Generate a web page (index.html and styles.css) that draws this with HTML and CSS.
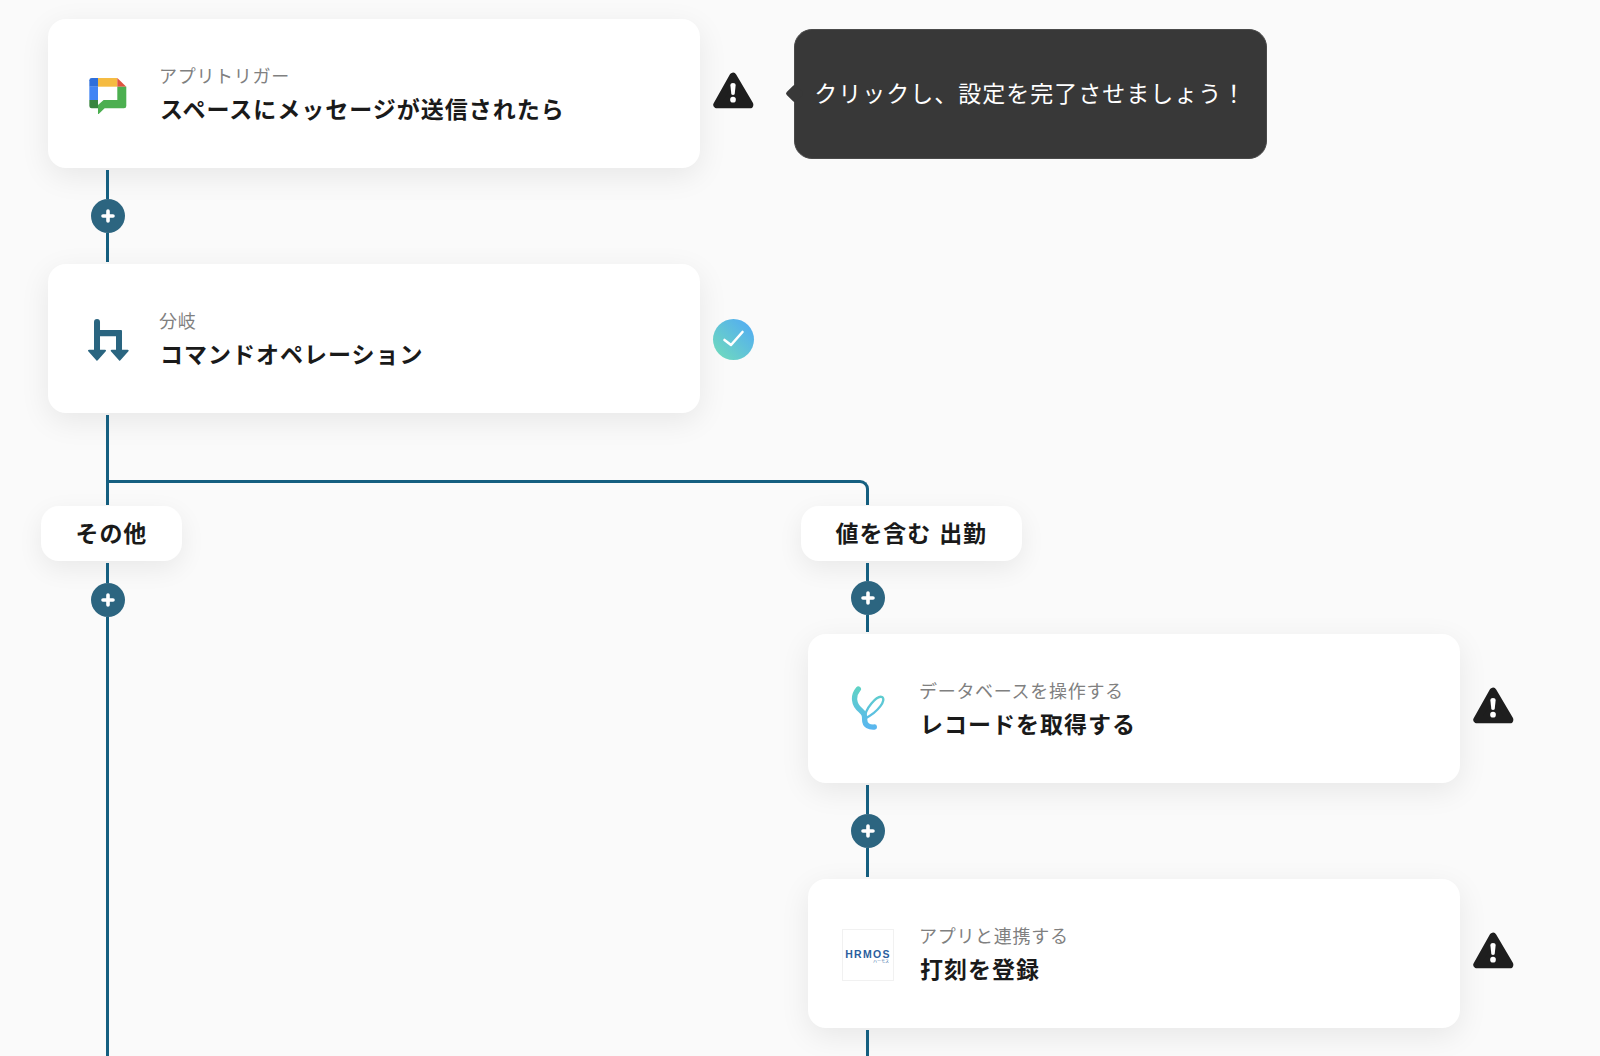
FILE: index.html
```html
<!DOCTYPE html>
<html lang="ja">
<head>
<meta charset="utf-8">
<title>フロー</title>
<link rel="stylesheet" href="styles.css">
</head>
<body>
<main class="canvas">
  <div class="step">
    <article class="card">
      <div class="icon-box">
        <svg class="ico-chat" viewBox="58 52 112 110">
          <path fill="#2f6fdb" d="M66 52H85V78H59V59Q59 52 66 52Z"/>
          <rect fill="#4285f4" x="59" y="78" width="26" height="40"/>
          <path fill="#38853f" d="M59 118H85V143H66Q59 143 59 136Z"/>
          <rect fill="#f5bb41" x="85" y="52" width="58" height="26"/>
          <path fill="#e0533f" d="M143 52L170 78H143Z"/>
          <path fill="#4caf50" d="M143 78H170V136Q170 143 163 143H105L85 162V118H143Z"/>
          <path fill="#fff" d="M85 118H102L85 133Z"/>
        </svg>
      </div>
      <div class="text">
        <p class="sub">アプリトリガー</p>
        <h2 class="title">スペースにメッセージが送信されたら</h2>
      </div>
    </article>
    <svg class="warn" viewBox="40 35 122 110"><path class="warn-bg" d="M100 48L52 133H150Z"/><path class="warn-mark" d="M92 74Q92 68 100 68Q108 68 108 74L105 102Q100 106 95 102Z"/><circle class="warn-mark" cx="100" cy="118" r="8.5"/></svg>
    <div class="tooltip">クリックし、設定を完了させましょう！</div>
  </div>

  <div class="link">
    <span class="line"></span>
    <span class="plus"><svg viewBox="0 0 14 14"><path d="M7 2V12M2 7H12"/></svg></span>
    <span class="line"></span>
  </div>

  <div class="step">
    <article class="card">
      <div class="icon-box">
        <svg class="ico-branch" viewBox="50 52 128 132">
          <path fill="#2a6580" stroke="#2a6580" stroke-width="6" stroke-linejoin="round" d="M74 64a6 6 0 0 1 12 0V91H152V150H172L148 177L124 150H140V104H86V150H104L80 177L56 150H74Z"/>
        </svg>
      </div>
      <div class="text">
        <p class="sub">分岐</p>
        <h2 class="title">コマンドオペレーション</h2>
      </div>
    </article>
    <span class="check"><svg viewBox="0 0 41 41"><path d="M11.5 21L18 26L29.500 13"/></svg></span>
  </div>

  <div class="link stem"><span class="line"></span></div>
  <div class="bus"></div>

  <div class="branches">
    <section class="column column-left">
      <div class="pill">その他</div>
      <div class="link rail">
        <span class="line line-short"></span>
        <span class="plus"><svg viewBox="0 0 14 14"><path d="M7 2V12M2 7H12"/></svg></span>
        <span class="line"></span>
      </div>
    </section>

    <section class="column">
      <div class="pill">値を含む 出勤</div>
      <div class="link link-short">
        <span class="line"></span>
        <span class="plus"><svg viewBox="0 0 14 14"><path d="M7 2V12M2 7H12"/></svg></span>
        <span class="line"></span>
      </div>
      <div class="step">
        <article class="card">
          <div class="icon-box">
            <svg class="ico-yoom" viewBox="60 40 120 140">
              <defs>
                <linearGradient id="yg" gradientUnits="userSpaceOnUse" x1="0" y1="50" x2="0" y2="178">
                  <stop offset="0" stop-color="#5fd3c4"/>
                  <stop offset="1" stop-color="#5ab6f0"/>
                </linearGradient>
              </defs>
              <path fill="none" stroke="url(#yg)" stroke-width="7" d="M106 146C102 118 142 76 156 82C170 90 146 126 106 146Z"/>
              <path fill="none" stroke="url(#yg)" stroke-width="16" stroke-linecap="round" d="M85 58C68 78 70 105 92 122C104 132 104 140 104 150C104 168 118 173 133 172"/>
            </svg>
          </div>
          <div class="text">
            <p class="sub">データベースを操作する</p>
            <h2 class="title">レコードを取得する</h2>
          </div>
        </article>
        <svg class="warn" viewBox="40 35 122 110"><path class="warn-bg" d="M100 48L52 133H150Z"/><path class="warn-mark" d="M92 74Q92 68 100 68Q108 68 108 74L105 102Q100 106 95 102Z"/><circle class="warn-mark" cx="100" cy="118" r="8.5"/></svg>
      </div>
      <div class="link">
        <span class="line"></span>
        <span class="plus"><svg viewBox="0 0 14 14"><path d="M7 2V12M2 7H12"/></svg></span>
        <span class="line"></span>
      </div>
      <div class="step">
        <article class="card">
          <div class="icon-box logo-box">
            <span class="logo-name">HRMOS</span>
            <span class="logo-kana">ハーモス</span>
          </div>
          <div class="text">
            <p class="sub">アプリと連携する</p>
            <h2 class="title">打刻を登録</h2>
          </div>
        </article>
        <svg class="warn" viewBox="40 35 122 110"><path class="warn-bg" d="M100 48L52 133H150Z"/><path class="warn-mark" d="M92 74Q92 68 100 68Q108 68 108 74L105 102Q100 106 95 102Z"/><circle class="warn-mark" cx="100" cy="118" r="8.5"/></svg>
      </div>
      <div class="link rail"><span class="line"></span></div>
    </section>
  </div>
</main>
</body>
</html>
```
FILE: styles.css
```css
* { box-sizing: border-box; }
html, body { margin: 0; padding: 0; }
body {
  background: #fafafa;
  font-family: "Noto Sans CJK JP", "Noto Sans", sans-serif;
  overflow: hidden;
}
.canvas {
  width: 1600px;
  height: 1056px;
  padding: 19px 0 0 41px;
  display: flex;
  flex-direction: column;
  overflow: hidden;
}
.step {
  display: flex;
  align-items: center;
  flex: none;
  margin-left: 7px;
}
.card {
  width: 652px;
  height: 149px;
  flex: none;
  background: #fff;
  border-radius: 18px;
  box-shadow: 0 8px 30px rgba(0, 0, 0, .08);
  display: flex;
  align-items: center;
  padding-left: 34px;
  gap: 25px;
}
.icon-box {
  width: 52px;
  height: 52px;
  flex: none;
  display: flex;
  align-items: center;
  justify-content: center;
  margin-top: 3px;
}
.ico-chat { width: 37.300px; height: 36.700px; margin-top: 2px; }
.ico-branch { width: 42.700px; height: 44px; margin-top: -1px; }
.ico-yoom { width: 40px; height: 46.700px; margin: -7px 0 0 4px; }
.logo-box {
  border: 1px solid #f1f1f1;
  flex-direction: column;
  align-items: center;
  line-height: 1;
  padding-top: 2px;
}
.logo-name {
  font-family: "Liberation Sans", sans-serif;
  font-weight: 700;
  font-size: 10.500px;
  letter-spacing: 1.300px;
  color: #2b5f9e;
}
.logo-kana {
  align-self: flex-end;
  margin-right: 4px;
  font-size: 4px;
  color: #2b5f9e;
}
.text { min-width: 0; margin-top: -1px; }
.sub {
  margin: 0;
  font-size: 18px;
  line-height: 26px;
  font-weight: 400;
  letter-spacing: .7px;
  color: #808080;
}
.title {
  margin: 4px 0 0 1px;
  font-size: 23px;
  line-height: 33px;
  font-weight: 700;
  letter-spacing: 1px;
  color: #1a1a1a;
}
.warn {
  width: 40.700px;
  height: 36.700px;
  flex: none;
  margin-left: 13px;
  margin-top: -6px;
}
.warn-bg {
  fill: #1e1e1e;
  stroke: #1e1e1e;
  stroke-width: 22;
  stroke-linejoin: round;
}
.warn-mark { fill: #fff; }
.check {
  width: 41px;
  height: 41px;
  flex: none;
  margin-left: 12.500px;
  margin-top: 2px;
  border-radius: 50%;
  background: linear-gradient(45deg, #6dd6c2 15%, #55b0ee 85%);
  display: flex;
}
.check svg {
  width: 100%;
  height: 100%;
  fill: none;
  stroke: #fff;
  stroke-width: 2.600;
  stroke-linecap: round;
  stroke-linejoin: round;
}
.tooltip {
  position: relative;
  width: 473px;
  height: 130px;
  flex: none;
  margin-left: 40.500px;
  display: flex;
  align-items: center;
  padding: 0 0 4px 19px;
  background: #383838;
  border: 1px solid #4a4a4a;
  border-radius: 18px;
  color: #fff;
  font-size: 23px;
  letter-spacing: 1px;
  white-space: nowrap;
}
.tooltip::before {
  content: "";
  position: absolute;
  left: -7px;
  top: 50%;
  width: 13px;
  height: 13px;
  margin-top: -6.500px;
  background: #383838;
  border-radius: 2px;
  transform: rotate(45deg);
}
.link {
  width: 34px;
  height: 96px;
  flex: none;
  margin-left: 50px;
  padding: 2px 0;
  display: flex;
  flex-direction: column;
  align-items: center;
}
.line {
  width: 3px;
  flex: 1;
  margin-right: 1px;
  background: #155f80;
}
.plus {
  width: 34px;
  height: 34px;
  flex: none;
  border-radius: 50%;
  background: #2c6580;
  display: flex;
  align-items: center;
  justify-content: center;
}
.plus svg {
  width: 14px;
  height: 14px;
  fill: none;
  stroke: #fff;
  stroke-width: 3.600;
  stroke-linecap: round;
}
.stem { height: 67px; padding-bottom: 0; }
.bus {
  width: 763px;
  height: 25px;
  flex: none;
  margin-left: 65px;
  border: 3px solid #155f80;
  border-bottom: 0;
  border-top-right-radius: 9px;
}
.branches {
  flex: 1;
  display: flex;
  margin-top: 1px;
  min-height: 0;
}
.column {
  display: flex;
  flex-direction: column;
  min-height: 0;
}
.column-left { width: 760px; flex: none; }
.pill {
  align-self: flex-start;
  height: 55px;
  flex: none;
  padding: 0 34.500px 3px;
  display: flex;
  align-items: center;
  background: #fff;
  border-radius: 18px;
  box-shadow: 0 8px 26px rgba(0, 0, 0, .07);
  font-size: 23px;
  font-weight: 700;
  letter-spacing: .9px;
  word-spacing: 2px;
  color: #1a1a1a;
}
.link-short { height: 73px; }
.rail { flex: 1; height: auto; padding-bottom: 0; }
.line-short { flex: none; height: 20px; }
```
